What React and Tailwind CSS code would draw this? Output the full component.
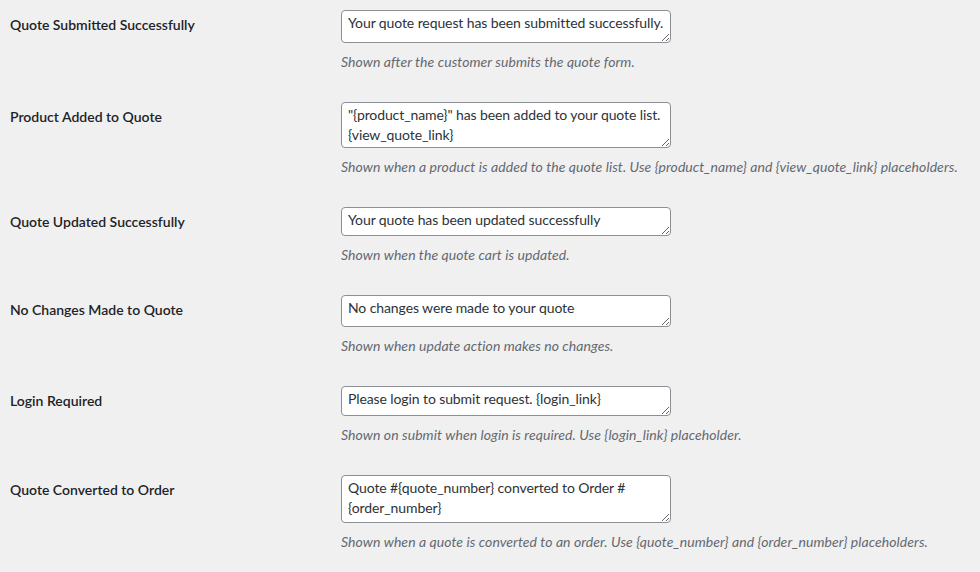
import React from "react";

const rows = [
  {
    label: "Quote Submitted Successfully",
    value: "Your quote request has been submitted successfully.",
    desc: "Shown after the customer submits the quote form.",
    h: "h-[33px]",
  },
  {
    label: "Product Added to Quote",
    value: '"{product_name}" has been added to your quote list.\n{view_quote_link}',
    desc: "Shown when a product is added to the quote list. Use {product_name} and {view_quote_link} placeholders.",
    h: "h-[46px]",
  },
  {
    label: "Quote Updated Successfully",
    value: "Your quote has been updated successfully",
    desc: "Shown when the quote cart is updated.",
    h: "h-[29px]",
  },
  {
    label: "No Changes Made to Quote",
    value: "No changes were made to your quote",
    desc: "Shown when update action makes no changes.",
    h: "h-[32px]",
  },
  {
    label: "Login Required",
    value: "Please login to submit request. {login_link}",
    desc: "Shown on submit when login is required. Use {login_link} placeholder.",
    h: "h-[30px]",
  },
  {
    label: "Quote Converted to Order",
    value: "Quote #{quote_number} converted to Order #\n{order_number}",
    desc: "Shown when a quote is converted to an order. Use {quote_number} and {order_number} placeholders.",
    h: "h-[48px]",
  },
];

export default function App() {
  return (
    <div
      className="w-[980px] h-[572px] overflow-hidden bg-[#f0f0f1] pt-[10px] text-[14px]"
      style={{ fontFamily: '"Lato", "Liberation Sans", sans-serif' }}
    >
      {rows.map((r) => (
        <div key={r.label} className="flex pb-[30px]">
          <div className="w-[341px] shrink-0 pl-[10px] pt-[5px] leading-[20px] font-semibold text-[#1d2327]">
            {r.label}
          </div>
          <div className="flex flex-col">
            <textarea
              readOnly
              defaultValue={r.value}
              className={`w-[330px] ${r.h} block rounded-[4px] border border-[#8c8f94] bg-white px-[6px] pt-[2px] pb-0 leading-[20px] tracking-[-0.1px] text-[#2c3338] whitespace-pre overflow-hidden outline-none`}
            />
            <p className="mt-[9px] h-[20px] leading-[20px] italic tracking-[0.07px] text-[#646970] whitespace-nowrap">
              {r.desc}
            </p>
          </div>
        </div>
      ))}
    </div>
  );
}
